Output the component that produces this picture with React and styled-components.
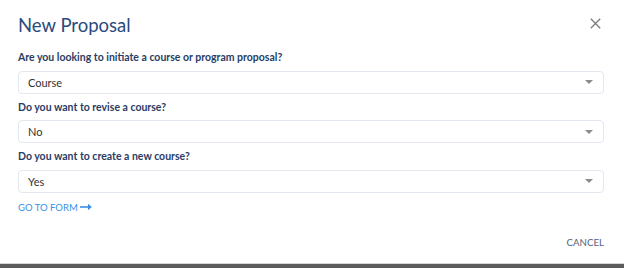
import { createGlobalStyle, styled } from 'styled-components';

const GlobalStyle = createGlobalStyle`
  html, body {
    margin: 0;
    padding: 0;
    background: #5c5c5c;
    font-family: Lato, 'Open Sans', sans-serif;
  }
`;

const questions = [
  { label: 'Are you looking to initiate a course or program proposal?', value: 'Course' },
  { label: 'Do you want to revise a course?', value: 'No' },
  { label: 'Do you want to create a new course?', value: 'Yes' },
];

const App = () => {
  return (
    <>
      <GlobalStyle />
      <Dialog>
        <Header>
          <Title>New Proposal</Title>
          <CloseButton aria-label="close">
            <svg width="11" height="11" viewBox="0 0 11 11">
              <path d="M0.8 0.8L10.2 10.2M10.2 0.8L0.8 10.2" stroke="#7a7a7a" strokeWidth="1.3" fill="none" />
            </svg>
          </CloseButton>
        </Header>
        <Body>
          {questions.map((q) => (
            <Field key={q.label}>
              <Label>{q.label}</Label>
              <Select>
                <span>{q.value}</span>
                <Caret />
              </Select>
            </Field>
          ))}
          <FormLink>
            GO TO FORM
            <svg width="12" height="8" viewBox="0 0 12 8">
              <path d="M0 4H9" stroke="#3b8fe6" strokeWidth="1.6" />
              <path d="M8 0.8L11.8 4L8 7.2Z" fill="#3b8fe6" />
            </svg>
          </FormLink>
        </Body>
        <Footer>
          <CancelButton>CANCEL</CancelButton>
        </Footer>
      </Dialog>
    </>
  );
};

const Dialog = styled.div`
  background: #fff;
  height: 264px;
  box-sizing: border-box;
  display: flex;
  flex-direction: column;
  box-shadow: 0 1px 2px rgba(0, 0, 0, 0.25);
  border-bottom: 1px solid #d6d6d6;
`;

const Header = styled.div`
  display: flex;
  justify-content: space-between;
  align-items: center;
  padding: 9px 23px 0 18px;
  height: 28px;
`;

const Title = styled.h2`
  margin: 0;
  padding-top: 3px;
  font-weight: 400;
  font-size: 18.5px;
  color: #2c4a7c;
`;

const CloseButton = styled.button`
  border: none;
  background: none;
  padding: 0;
  display: flex;
  cursor: pointer;
  margin-top: 1px;
`;

const Body = styled.div`
  padding: 13px 20px 0 18px;
  display: flex;
  flex-direction: column;
  gap: 6px;
`;

const Field = styled.div`
  display: flex;
  flex-direction: column;
  gap: 6px;
`;

const Label = styled.div`
  font-weight: 700;
  font-size: 10.5px;
  color: #2a3d63;
  line-height: 14.5px;
`;

const Select = styled.div`
  height: 23px;
  box-sizing: border-box;
  border: 1px solid #e3e7ef;
  border-radius: 4px;
  display: flex;
  align-items: center;
  justify-content: space-between;
  padding: 0 10px 0 9px;
  font-size: 11px;
  color: #333;
`;

const Caret = styled.span`
  width: 0;
  height: 0;
  border-left: 4px solid transparent;
  border-right: 4px solid transparent;
  border-top: 4px solid #8a8a8a;
`;

const FormLink = styled.a`
  display: flex;
  align-items: center;
  gap: 2px;
  font-size: 9.5px;
  color: #3b8fe6;
  text-decoration: none;
  margin-top: 3px;
  cursor: pointer;
`;

const Footer = styled.div`
  margin-top: auto;
  display: flex;
  justify-content: flex-end;
  padding: 0 20px 15px;
`;

const CancelButton = styled.button`
  border: none;
  background: none;
  padding: 0;
  font-family: Lato, sans-serif;
  font-size: 9.7px;
  color: #55627d;
  cursor: pointer;
`;

export default App;
